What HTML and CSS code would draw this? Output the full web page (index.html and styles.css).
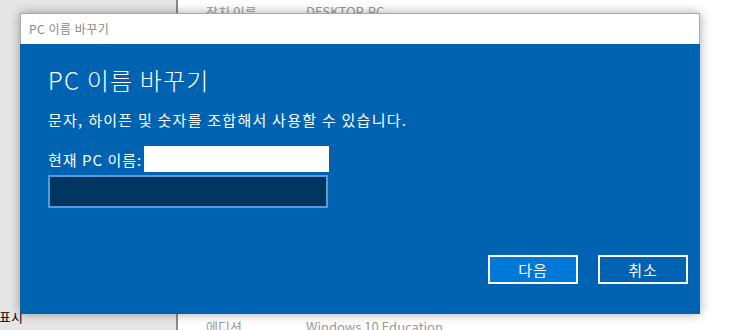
FILE: index.html
```html
<!DOCTYPE html>
<html>
<head>
    <title>PC 이름 바꾸기</title>
    <meta charset="utf-8">
    <link rel="stylesheet" href="styles.css">
</head>
<body>
    <div class="backdrop">
        <div class="sidebar">
            <div class="side-item">표시</div>
        </div>
        <div class="main">
            <div class="row top"><span class="key">장치 이름</span><span>DESKTOP-PC</span></div>
            <div class="row bottom"><span class="key">에디션</span><span>Windows 10 Education</span></div>
        </div>
    </div>

    <!-- 이름 바꾸기 대화상자 -->
    <div class="dialog">
        <div class="titlebar">PC 이름 바꾸기</div>
        <div class="content">
            <h1>PC 이름 바꾸기</h1>
            <p class="desc">문자, 하이픈 및 숫자를 조합해서 사용할 수 있습니다.</p>
            <div class="current">
                <span>현재 PC 이름:</span>
                <span class="current-name"></span>
            </div>
            <input type="text" class="name-input">
            <div class="buttons">
                <button class="primary">다음</button>
                <button>취소</button>
            </div>
        </div>
    </div>
</body>
</html>
```

FILE: styles.css
```css
body {
    margin: 0;
    width: 732px;
    height: 330px;
    overflow: hidden;
    font-family: "Noto Sans CJK KR", "Noto Sans", sans-serif;
    background-color: #fff;
}
.backdrop {
    display: flex;
    height: 330px;
}
.sidebar {
    width: 176px;
    background-color: #e6e6e6;
    border-right: 2px solid #8a8a8a;
    display: flex;
    flex-direction: column;
    justify-content: flex-end;
}
.side-item {
    font-size: 13px;
    color: #000;
    padding: 0 0 4px 0;
    margin-left: -1px;
    line-height: 18px;
}
.main {
    flex: 1;
    display: flex;
    flex-direction: column;
    justify-content: space-between;
    padding-left: 28px;
}
.row {
    font-size: 13px;
    color: #999;
    display: flex;
}
.row .key {
    width: 100px;
}
.row.top {
    margin-top: 2px;
}
.row.bottom {
    margin-bottom: -6px;
}
.dialog {
    position: absolute;
    left: 20px;
    top: 13px;
    width: 680px;
    height: 301px;
    box-shadow: 0 0 10px rgba(0,0,0,0.35);
    display: flex;
    flex-direction: column;
}
.titlebar {
    height: 30px;
    line-height: 30px;
    background-color: #fff;
    color: #888;
    font-size: 12px;
    letter-spacing: 0.5px;
    padding-left: 8px;
    border: 1px solid #aaa;
    border-bottom: none;
}
.content {
    flex: 1;
    background-color: #0063b1;
    color: #fff;
    padding: 0 12px 0 28px;
    display: flex;
    flex-direction: column;
}
h1 {
    font-size: 24px;
    font-weight: 300;
    letter-spacing: 1.2px;
    margin: 19px 0 0 0;
    line-height: 34px;
}
.desc {
    font-size: 15px;
    letter-spacing: 1.25px;
    margin: 13px 0 0 0;
    line-height: 20px;
}
.current {
    font-size: 15px;
    letter-spacing: 1px;
    margin-top: 16px;
    display: flex;
    align-items: center;
    height: 26px;
}
.current-name {
    width: 185px;
    height: 26px;
    background-color: #fff;
    margin-left: 2px;
}
.name-input {
    width: 280px;
    height: 33px;
    box-sizing: border-box;
    margin-top: 3px;
    background-color: #003660;
    border: 2px solid #5b9bd5;
    outline: none;
}
.buttons {
    display: flex;
    justify-content: flex-end;
    gap: 20px;
    margin-top: 47px;
}
button {
    width: 90px;
    height: 29px;
    box-sizing: border-box;
    background-color: #0063b1;
    border: 2px solid #fff;
    color: #fff;
    font-family: inherit;
    font-size: 15px;
    letter-spacing: 1px;
    padding: 0;
}
button.primary {
    background-color: #0078d7;
}
```
